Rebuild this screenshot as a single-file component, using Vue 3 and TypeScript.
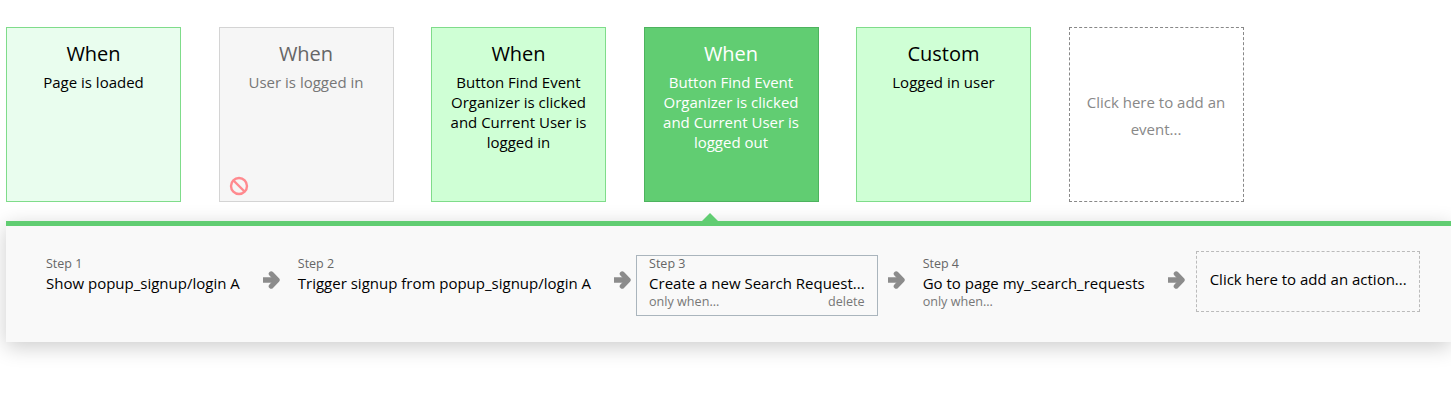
<script setup lang="ts">
interface EventCard { title?: string; body: string; kind: string; blocked?: boolean }
interface Step { label: string; name: string; onlyWhen?: boolean; selected?: boolean }

const cards: EventCard[] = [
  { title: 'When', body: 'Page is loaded', kind: 'pale' },
  { title: 'When', body: 'User is logged in', kind: 'off', blocked: true },
  { title: 'When', body: 'Button Find Event Organizer is clicked and Current User is logged in', kind: 'mint' },
  { title: 'When', body: 'Button Find Event Organizer is clicked and Current User is logged out', kind: 'active' },
  { title: 'Custom', body: 'Logged in user', kind: 'mint' },
  { body: 'Click here to add an event...', kind: 'add' },
]

const steps: Step[] = [
  { label: 'Step 1', name: 'Show popup_signup/login A' },
  { label: 'Step 2', name: 'Trigger signup from popup_signup/login A' },
  { label: 'Step 3', name: 'Create a new Search Request...', onlyWhen: true, selected: true },
  { label: 'Step 4', name: 'Go to page my_search_requests', onlyWhen: true },
]
</script>

<template>
  <div class="page">
    <div class="cards">
      <div v-for="(c, i) in cards" :key="i" class="card" :class="c.kind">
        <div v-if="c.title" class="title">{{ c.title }}</div>
        <div class="body">{{ c.body }}</div>
        <svg v-if="c.blocked" class="ban" viewBox="0 0 20 20" width="20" height="20">
          <circle cx="10" cy="10" r="8" fill="none" stroke="#ff8a8f" stroke-width="2.4" />
          <line x1="4.5" y1="4.5" x2="15.5" y2="15.5" stroke="#ff8a8f" stroke-width="2.4" />
        </svg>
      </div>
    </div>
    <div class="panel">
      <div class="notch"></div>
      <template v-for="s in steps" :key="s.label">
        <div class="step" :class="{ selected: s.selected }">
          <div class="label">{{ s.label }}</div>
          <div class="name">{{ s.name }}</div>
          <div v-if="s.onlyWhen" class="meta">
            <span>only when...</span>
            <span v-if="s.selected">delete</span>
          </div>
        </div>
        <svg class="arrow" viewBox="0 0 17 18" width="17" height="18">
          <path d="M0.5 9H13" fill="none" stroke="#8c8c8c" stroke-width="5.6" stroke-linecap="round" />
          <path d="M8.2 2.8L14.2 9L8.2 15.2" fill="none" stroke="#8c8c8c" stroke-width="5" stroke-linejoin="round" stroke-linecap="round" />
        </svg>
      </template>
      <div class="add-action">Click here to add an action...</div>
    </div>
  </div>
</template>

<style>
html, body { margin: 0; background: #fff; }
</style>

<style scoped>
.page {
  width: 1451px;
  height: 402px;
  overflow: hidden;
  font-family: "Open Sans", "Noto Sans", sans-serif;
  color: #000;
  padding: 27px 0 0 6px;
  box-sizing: border-box;
}
.cards { display: flex; gap: 37.5px; }
.card {
  position: relative;
  box-sizing: border-box;
  width: 175px;
  height: 175px;
  border: 1px solid #7fdc8a;
  padding: 12px 12px 0;
  text-align: center;
  font-size: 15px;
  line-height: 20px;
}
.title { font-size: 20px; line-height: 27px; margin-bottom: 5px; }
.pale { background: #e9fdee; }
.mint { background: #cfffd5; }
.off { background: #f6f6f6; border-color: #d4d4d4; color: #777; }
.off .title { color: #666; }
.active { background: #61cd72; border-color: #4db35e; color: #fff; }
.add {
  background: #fff;
  border: 1px dashed #888;
  color: #888;
  display: flex;
  align-items: center;
  justify-content: center;
  padding: 0 14px;
  line-height: 27px;
}
.add .body { margin-top: 2px; }
.ban { position: absolute; left: 9px; bottom: 5px; }
.panel {
  position: relative;
  box-sizing: border-box;
  width: 1445px;
  height: 121px;
  margin-top: 19px;
  background: #f9f9f9;
  border-top: 5px solid #61cd72;
  box-shadow: 0 5px 20px rgba(0, 0, 0, 0.2);
  display: flex;
  align-items: flex-start;
  padding: 29px 0 0 27px;
}
.notch {
  position: absolute;
  top: -13px;
  left: 696px;
  width: 0;
  height: 0;
  border-left: 8px solid transparent;
  border-right: 8px solid transparent;
  border-bottom: 8px solid #61cd72;
}
.step {
  flex: none;
  box-sizing: border-box;
  height: 61px;
  border: 1px solid transparent;
  padding: 0 12px;
}
.label { font-size: 12.5px; line-height: 15px; color: #666; }
.name { font-size: 15px; line-height: 20px; margin-top: 2px; color: #000; white-space: nowrap; }
.meta {
  display: flex;
  justify-content: space-between;
  font-size: 12.6px;
  line-height: 15px;
  margin-top: 1px;
  color: #777;
}
.selected { border-color: #aab5bd; }
.arrow { flex: none; margin: 16px 5px 0 10px; }
.arrow:last-of-type { margin-right: 11px; }
.add-action {
  box-sizing: border-box;
  flex: none;
  width: 224px;
  height: 61px;
  margin-top: -4px;
  border: 1px dashed #bbb;
  font-size: 15px;
  line-height: 20px;
  padding: 0 13px 5px;
  display: flex;
  align-items: center;
  white-space: nowrap;
}
</style>
